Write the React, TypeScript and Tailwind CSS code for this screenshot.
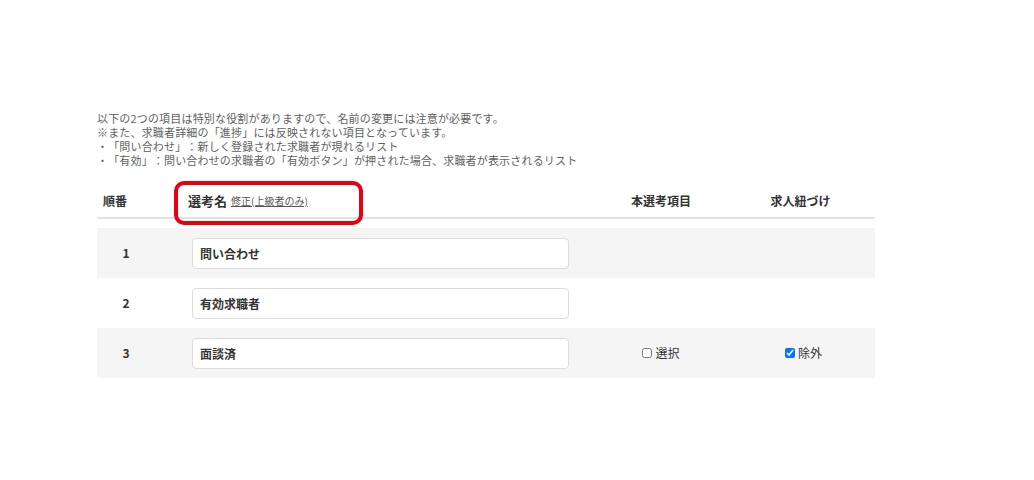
import React from "react";

const rows = [
    { no: 1, name: "問い合わせ", main: false, link: false },
    { no: 2, name: "有効求職者", main: false, link: false },
    { no: 3, name: "面談済", main: true, link: true },
];

export default function App() {
    return (
        <div
            className="min-h-[480px] w-full bg-white pl-[97px] pt-[111px] text-[#333] [text-spacing-trim:space-all]"
            style={{ fontFamily: '"Noto Sans CJK JP", "Noto Sans", sans-serif' }}
        >
            {/* Notice */}
            <div className="text-[11px] leading-[14px] tracking-[0.17px] text-[#5f5f5f]">
                <p>以下の2つの項目は特別な役割がありますので、名前の変更には注意が必要です。</p>
                <p>※また、求職者詳細の「進捗」には反映されない項目となっています。</p>
                <p>・「問い合わせ」：新しく登録された求職者が現れるリスト</p>
                <p>・「有効」：問い合わせの求職者の「有効ボタン」が押された場合、求職者が表示されるリスト</p>
            </div>

            {/* Table */}
            <div className="mt-[17px] w-[778px]">
                <div className="relative flex h-[35px] items-center border-b-2 border-[#e2e2e2] text-[12px] font-bold">
                    <div className="w-[58px] pl-[6px]">順番</div>
                    <div className="flex w-[441px] items-center pl-[33px]">
                        <span className="text-[13px]">選考名</span>
                        <a className="ml-[4px] text-[10px] font-normal text-[#555] underline">
                            修正(上級者のみ)
                        </a>
                    </div>
                    <div className="w-[130px] text-center">本選考項目</div>
                    <div className="flex-1 text-center">求人紐づけ</div>
                    {/* highlight */}
                    <div className="absolute left-[77px] top-[-3px] h-[44px] w-[189px] rounded-[10px] border-4 border-[#e60012]" />
                </div>

                <div className="h-[9px]" />

                {rows.map((r) => (
                    <div
                        key={r.no}
                        className={
                            "flex h-[50px] items-center " +
                            (r.no % 2 === 1 ? "bg-[#f5f5f5]" : "bg-white")
                        }
                    >
                        <div className="w-[58px] text-center text-[12px] font-bold">{r.no}</div>
                        <div className="w-[441px] pl-[37px]">
                            <input
                                type="text"
                                defaultValue={r.name}
                                className="h-[31px] w-[377px] rounded-[4px] border border-[#dcdcdc] bg-white px-[7px] text-[12px] font-bold text-[#333] outline-none"
                            />
                        </div>
                        <div className="flex w-[130px] items-center justify-center">
                            {r.main && (
                                <label className="flex items-center gap-[3px] text-[12px]">
                                    <input type="checkbox" className="m-0 h-[10px] w-[10px]" />
                                    選択
                                </label>
                            )}
                        </div>
                        <div className="flex flex-1 items-center justify-center pl-[6px]">
                            {r.link && (
                                <label className="flex items-center gap-[3px] text-[12px]">
                                    <input type="checkbox" defaultChecked className="m-0 h-[10px] w-[10px]" />
                                    除外
                                </label>
                            )}
                        </div>
                    </div>
                ))}
            </div>
        </div>
    );
}
